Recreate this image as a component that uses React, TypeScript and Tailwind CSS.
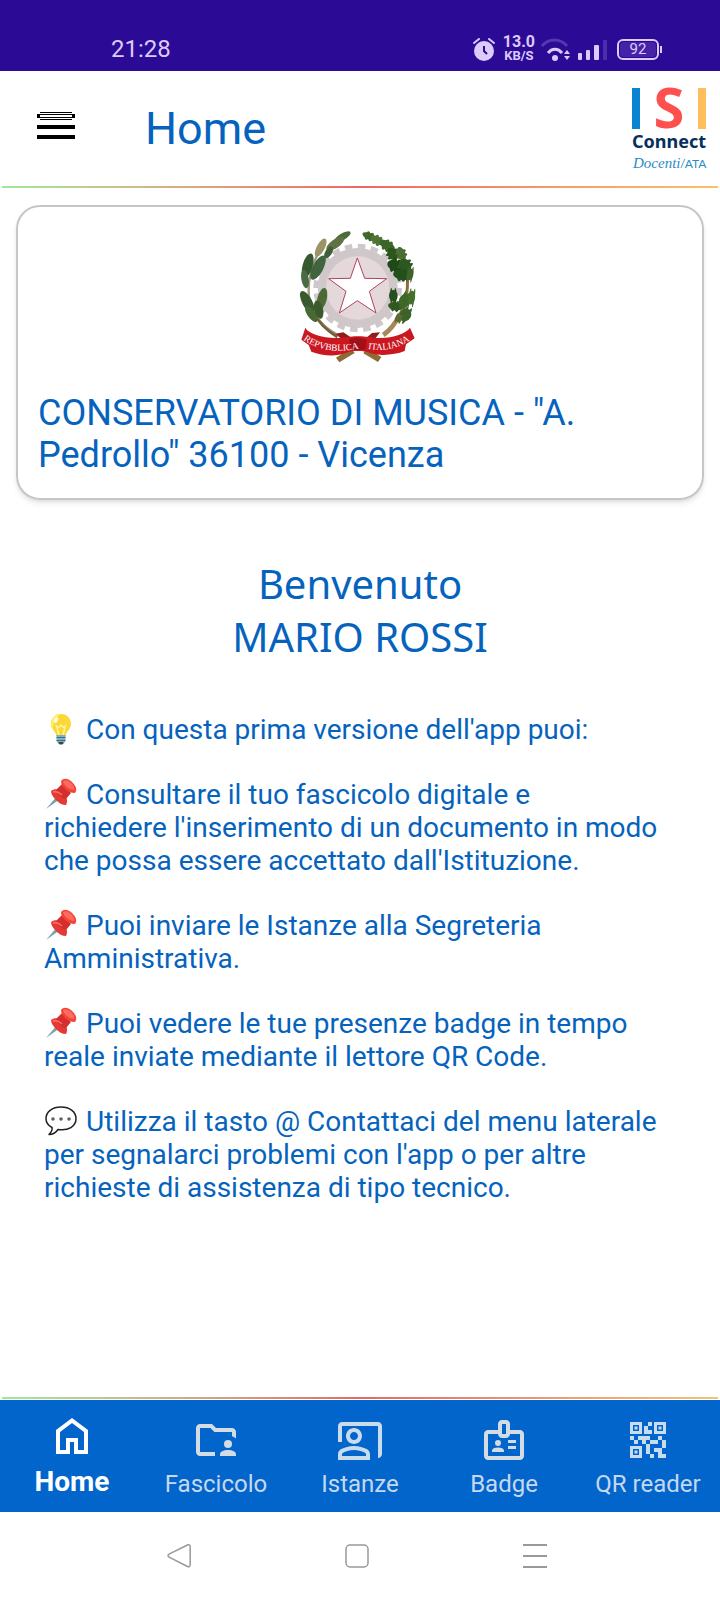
import React from 'react';
import { MdOutlineBadge, MdOutlineCoPresent, MdQrCode2 } from 'react-icons/md';

const leaves = [
  // olive branch: cx, cy, rx, ry, rotation, colour
  [218, 113, 27, 10, -30, '#4b6b3a'],
  [196, 134, 32, 13, -36, '#5f7245'],
  [176, 160, 20, 10, -58, '#3f5f36'],
  [152, 146, 30, 12, -62, '#9a9468'],
  [144, 206, 40, 16, -62, '#41643f'],
  [113, 200, 38, 15, -74, '#35582f'],
  [105, 240, 28, 11, -100, '#4a6b43'],
  [112, 310, 38, 15, 62, '#39592f'],
  [124, 345, 28, 12, 55, '#476936'],
  [156, 300, 34, 14, -76, '#4c6a36'],
  [146, 332, 28, 13, 76, '#3a5a2c'],
] as const;

const oakLeaves = [
  [298, 112, 22, 12, 22, '#41692b'],
  [322, 124, 22, 14, 30, '#4f7433'],
  [352, 140, 26, 16, 32, '#3c6529'],
  [368, 165, 20, 18, 60, '#2d5520'],
  [394, 165, 22, 15, 70, '#4a6f33'],
  [376, 200, 25, 20, 20, '#1f4a18'],
  [405, 200, 22, 22, 60, '#2c5822'],
  [396, 228, 27, 18, 10, '#24501b'],
  [420, 226, 10, 22, 10, '#3c6329'],
  [370, 290, 13, 21, 0, '#24511e'],
  [376, 322, 22, 15, 10, '#2f5920'],
  [404, 305, 17, 26, 20, '#3c6927'],
  [425, 296, 10, 26, 8, '#44702c'],
  [406, 348, 17, 25, 32, '#3c6328'],
  [386, 358, 10, 14, 20, '#5c6a33'],
] as const;

const Emblem = () => (
  <svg viewBox="84 90 360 405" className="h-[135px] w-[120px]" role="img" aria-label="Repubblica Italiana">
    <circle cx="263" cy="267" r="122" fill="none" stroke="#d0c7ca" strokeWidth="22" strokeDasharray="22 16.300" />
    <circle cx="263" cy="267" r="120" fill="#d0c7ca" />
    <circle cx="263" cy="267" r="95" fill="#e5d8db" />
    <path
      d="M262 177l22 61 66 1-52 38 20 65-56-37-54 37 20-65-52-38 65-1z"
      fill="#fff"
      stroke="#b0435c"
      strokeWidth="3"
    />
    <path d="M150 150c-30 60-42 110-30 160 12 44 40 74 80 96" fill="none" stroke="#a09a80" strokeWidth="7" />
    <path d="M130 340c16 32 40 54 72 74" fill="none" stroke="#75603a" strokeWidth="8" />
    <path d="M410 215c10 70-6 130-60 186" fill="none" stroke="#8b6c3f" strokeWidth="9" />
    <path d="M388 348c-12 26-26 44-48 60" fill="none" stroke="#a58a58" strokeWidth="14" />
    {leaves.map(([cx, cy, rx, ry, rotation, fill], i) => (
      <ellipse key={i} cx={cx} cy={cy} rx={rx} ry={ry} fill={fill} transform={`rotate(${rotation} ${cx} ${cy})`} />
    ))}
    {oakLeaves.map(([cx, cy, rx, ry, rotation, fill], i) => (
      <g key={i} fill={fill} transform={`rotate(${rotation} ${cx} ${cy})`}>
        <ellipse cx={cx} cy={cy} rx={rx} ry={ry * 0.8} />
        <ellipse cx={cx - 6} cy={cy} rx={rx * 0.3} ry={ry * 1.1} />
        <ellipse cx={cx + 6} cy={cy} rx={rx * 0.3} ry={ry * 1.1} />
      </g>
    ))}
    <path d="M242 448l-44 28 10 14 46-28zM290 448l44 26-10 15-44-26z" fill="#8e6a35" />
    <path d="M196 404l24-4 30 20-28 6zM330 400l-24 2-24 20 30 2z" fill="#8f1d1c" />
    <path
      d="M106 386c10 20 60 34 108 30 20-2 36-4 50-4s30 2 50 4c48 4 92-10 106-30l14 32-26 18-4 20c-30 12-74 16-104 6-10-4-22-6-36-6s-26 2-36 6c-32 12-72 8-104-4l-8-20-22-16z"
      fill="#cb1720"
    />
    <path d="M238 420l24-6 28 8-4 30h-44z" fill="#a30f16" />
    <path id="motto-left" d="M100 422c44 34 108 42 178 24" fill="none" />
    <path id="motto-right" d="M294 450c52 8 96-2 144-38" fill="none" />
    <g fill="#fff" className="font-['Liberation_Serif',serif] text-[28px]">
      <text>
        <textPath href="#motto-left">REPVBBLICA</textPath>
      </text>
      <text>
        <textPath href="#motto-right">ITALIANA</textPath>
      </text>
    </g>
  </svg>
);

const IsiLogo = () => (
  <svg viewBox="0 0 80 90" className="h-[90px] w-[80px] overflow-visible" role="img" aria-label="ISI Connect Docenti/ATA">
    <rect x="4" y="4" width="8" height="41" fill="#0a84d0" />
    <rect x="70" y="4" width="8" height="41" fill="#ffbe5c" />
    <text x="41" y="44" textAnchor="middle" fill="#ff5050" className="font-['Open_Sans',sans-serif] text-[56px] font-bold">
      S
    </text>
    <text x="4" y="64" fill="#06305c" className="font-['Noto_Sans',sans-serif] text-[18px] font-bold">
      Connect
    </text>
    <text x="5" y="84" fill="#2b8cc4" className="font-['Liberation_Serif',serif] text-[15px] italic">
      Docenti
    </text>
    <text x="52" y="84" fill="#2b8cc4" className="font-['Lato',sans-serif] text-[12px]">
      /ATA
    </text>
  </svg>
);

const MenuIcon = () => (
  <svg viewBox="0 0 38 28" className="h-7 w-[38px]" shapeRendering="crispEdges" aria-hidden="true">
    <path d="M3 0h32v1H3zM0 2h38v4H0zM3 7h32v1H3zM0 13h38v4H0zM0 23h38v4H0z" />
    <path d="M3 3h32v2H3z" fill="#fff" />
  </svg>
);

const emojiClass = 'mr-2 inline-block h-8 w-[34px] align-[-6px]';

const BulbEmoji = () => (
  <svg viewBox="0 0 34 32" className={emojiClass} role="img" aria-label="Idea">
    <path d="M17 1C10.500 1 7 6 7 11c0 5 4.500 7 5.500 12h9C22.500 18 27 16 27 11c0-5-3.500-10-10-10z" fill="#fdd835" />
    <path d="M17 1C10.500 1 7 6 7 11c0 2 .6 3.500 1.500 5C10 9 12 4 17 1z" fill="#ffee58" />
    <path d="M15 22l-2.500-9 2 1.500L17 12l2.500 2.500 2-1.500L19 22" fill="none" stroke="#fff59d" strokeWidth="1.500" />
    <ellipse cx="12" cy="7" rx="2" ry="3" fill="#fffde7" transform="rotate(30 12 7)" />
    <path d="M12.500 22h9v6l-2 3h-5l-2-3z" fill="#82aec0" />
    <path d="M12.500 24.500h9M12.500 27.500h9" stroke="#2f7889" strokeWidth="1" />
    <path d="M14.500 29h5l-1 2.500h-3z" fill="#424242" />
  </svg>
);

const PinEmoji = () => (
  <svg viewBox="0 0 34 32" className={emojiClass} role="img" aria-label="Nota">
    <path d="M2 31l11-13 3 3z" fill="#78a3ad" />
    <path d="M7 13c4-3 8-2 12 2s5 8 3 12c-4 0-7-2-10-5s-5-6-5-9z" fill="#e53935" />
    <path d="M12 12l6-6 9 9-5 6c-5-1-8-4-10-9z" fill="#d32f2f" />
    <path d="M17 3c3-4 8-2 11 1s6 7 3 11c-4 0-8-2-10-4s-4-5-4-8z" fill="#f44336" />
    <path d="M19 3c3-2 6 0 8 2s4 5 3 7c-4 0-10-4-11-9z" fill="#ff6b60" />
    <path d="M9 14c3-1 6 0 9 3" fill="none" stroke="#ff6b60" strokeWidth="1.500" />
  </svg>
);

const SpeechEmoji = () => (
  <svg viewBox="0 0 34 32" className={emojiClass} role="img" aria-label="Messaggio">
    <path
      d="M17 2C8 2 2 7 2 13.500c0 4 2 7 6 9 .5 2-.5 4.500-3 7 4 0 7-2 9-5 10.500 1.500 18-3 18-11C32 7 26 2 17 2z"
      fill="#fff"
      stroke="#212121"
      strokeWidth="1.500"
      strokeLinejoin="round"
    />
    <g fill="#616161">
      <circle cx="9" cy="14" r="1.800" />
      <circle cx="17" cy="14" r="1.800" />
      <circle cx="25" cy="14" r="1.800" />
    </g>
  </svg>
);

const HomeIcon = () => (
  <svg viewBox="0 0 24 24" className="h-12 w-12" fill="currentColor" aria-hidden="true">
    <path d="M6 19h3v-6h6v6h3v-9l-6-4.500L6 10v9zm-2 2V9l8-6 8 6v12h-7v-6h-2v6H4z" />
  </svg>
);

const FolderIcon = () => (
  <svg viewBox="0 0 24 24" className="h-12 w-12 text-[#d3dbe4]" fill="currentColor" aria-hidden="true">
    <path d="M11.500 20H4c-1.100 0-2-.9-2-2V6c0-1.100.9-2 2-2h6l2 2h8c1.100 0 2 .9 2 2v3.300c-.5-.5-1.200-.9-2-1.200V8h-8.800l-2-2H4v12h7.500z" />
    <circle cx="18" cy="14" r="2" />
    <path d="M14 20v-.8c0-1.300 1.700-2.200 4-2.200s4 .9 4 2.200v.8z" />
  </svg>
);

const tabs = [
  { label: 'Home', icon: <HomeIcon />, active: true },
  { label: 'Fascicolo', icon: <FolderIcon /> },
  { label: 'Istanze', icon: <MdOutlineCoPresent className="h-12 w-12 text-[#c9dced]" /> },
  { label: 'Badge', icon: <MdOutlineBadge className="h-12 w-12 text-[#d3dbe4]" /> },
  { label: 'QR reader', icon: <MdQrCode2 className="h-12 w-12 text-[#c9dced]" /> },
];

function StatusBar() {
  return (
    <div className="flex h-[71px] items-end bg-[#2b0a96] pr-[58px] pb-[7px] pl-[111px] text-[#dccbfa]">
      <span className="text-[24px] leading-[30px]">21:28</span>
      <div className="ml-auto flex items-center">
        <svg viewBox="0 0 22 24" className="h-6 w-[22px]" aria-hidden="true">
          <circle cx="11" cy="13" r="10" fill="currentColor" />
          <path d="M1 5l5-4M21 5l-5-4" stroke="currentColor" strokeWidth="2" strokeLinecap="round" />
          <path d="M11 8v5l3 3" fill="none" stroke="#2b0a96" strokeWidth="2" />
        </svg>
        <div className="ml-2 pb-0.5 text-center font-bold">
          <div className="text-[16px] leading-[14px]">13.0</div>
          <div className="text-[13px] leading-[13px]">KB/S</div>
        </div>
        <svg viewBox="0 0 30 24" className="ml-1.5 h-6 w-[30px]" fill="none" aria-hidden="true">
          <path d="M1 8c7-8 18-8 25 0" stroke="#5637ae" strokeWidth="3" />
          <path d="M7 15c4-5 10-5 14 0" stroke="currentColor" strokeWidth="3" />
          <circle cx="14" cy="20" r="3" fill="currentColor" />
          <path d="M23 16l3-4 3 4zM23 18l3 4 3-4z" fill="currentColor" />
        </svg>
        <svg viewBox="0 0 29 22" className="ml-[7px] h-[22px] w-[29px]" fill="currentColor" aria-hidden="true">
          <rect x="0" y="14" width="4" height="7" rx="1" />
          <rect x="8" y="11" width="4" height="10" rx="1" />
          <rect x="16" y="6" width="5" height="15" rx="1" />
          <rect x="25" y="1" width="4" height="20" rx="1" fill="#4e2cab" />
        </svg>
        <div className="ml-2.5 flex items-center gap-px">
          <div className="h-[21px] w-[42px] rounded-md border-2 border-current p-px">
            <div className="flex h-full items-center justify-center rounded-sm bg-[#4622a6] text-[15px]">92</div>
          </div>
          <div className="h-[7px] w-[2px] bg-current" />
        </div>
      </div>
    </div>
  );
}

export default function App() {
  return (
    <div className="flex min-h-screen flex-col bg-white font-['Roboto',sans-serif] text-[#0563be]">
      <StatusBar />

      <header>
        <div className="flex h-[115px] items-center pr-3">
          <button type="button" aria-label="Apri menu" className="mb-1.5 ml-[37px]">
            <MenuIcon />
          </button>
          <h1 className="ml-[70px] text-[45px] leading-[54px]">Home</h1>
          <div className="ml-auto">
            <IsiLogo />
          </div>
        </div>
        <div className="mx-0.5 h-0.5 bg-gradient-to-r from-[#9ee89e] via-[#ee6666] to-[#f8c268]" />
      </header>

      <main className="flex-1 px-4">
        <section className="mt-[17px] rounded-3xl border-2 border-[#c6c6c6] px-5 pt-[22px] pb-[22px] shadow-md">
          <div className="flex justify-center pr-1">
            <Emblem />
          </div>
          <h2 className="mt-7 text-[36px] leading-[42px]">CONSERVATORIO DI MUSICA - "A. Pedrollo" 36100 - Vicenza</h2>
        </section>

        <div className="mt-[57px] text-center font-['Noto_Sans',sans-serif] text-[40px] leading-[53px]">
          <p>Benvenuto</p>
          <p>MARIO ROSSI</p>
        </div>

        <div className="mt-[50px] space-y-8 px-7 text-[28px] leading-[33px]">
          <p>
            <BulbEmoji />
            Con questa prima versione dell'app puoi:
          </p>
          <p>
            <PinEmoji />
            Consultare il tuo fascicolo digitale e
            <br />
            richiedere l'inserimento di un documento in modo che possa essere accettato dall'Istituzione.
          </p>
          <p>
            <PinEmoji />
            Puoi inviare le Istanze alla Segreteria Amministrativa.
          </p>
          <p>
            <PinEmoji />
            Puoi vedere le tue presenze badge in tempo reale inviate mediante il lettore QR Code.
          </p>
          <p>
            <SpeechEmoji />
            Utilizza il tasto @ Contattaci del menu laterale per segnalarci problemi con l'app o per altre richieste di assistenza di tipo tecnico.
          </p>
        </div>
      </main>

      <div className="mx-0.5 mb-px h-0.5 bg-gradient-to-r from-[#9ee89e] via-[#e06a6a] to-[#f0c474]" />
      <nav className="grid h-28 grid-cols-5 bg-[#0265cc]">
        {tabs.map((tab) => (
          <button
            key={tab.label}
            type="button"
            aria-current={tab.active ? 'page' : undefined}
            className={
              tab.active
                ? 'flex flex-col items-center gap-1.5 pt-3 text-[28px] leading-8 font-bold text-white'
                : 'flex flex-col items-center gap-1.5 pt-4 text-[24px] leading-7 text-[#c6d8ee]'
            }
          >
            {tab.icon}
            <span className="whitespace-nowrap">{tab.label}</span>
          </button>
        ))}
      </nav>

      <div className="flex h-[88px] items-center justify-center gap-[154px] pr-1.5 text-[#999]">
        <button type="button" aria-label="Indietro">
          <svg viewBox="0 0 24 24" className="h-6 w-6" fill="none" stroke="currentColor" strokeWidth="1.500">
            <path d="M20.500 1L2.500 9.800c-2 1-2 2.600 0 3.600L20.500 22.500c1.500.7 2.700 0 2.700-1.500V2.500c0-1.500-1.200-2.200-2.700-1.500z" />
          </svg>
        </button>
        <button type="button" aria-label="Schermata principale">
          <svg viewBox="0 0 24 24" className="h-6 w-6" fill="none" stroke="currentColor" strokeWidth="1.500">
            <rect x="1" y="1" width="22" height="22" rx="4" />
          </svg>
        </button>
        <button type="button" aria-label="App recenti">
          <svg viewBox="0 0 24 24" className="h-6 w-6" stroke="currentColor" strokeWidth="2">
            <path d="M0 1h24M0 12h24M0 23h24" />
          </svg>
        </button>
      </div>
    </div>
  );
}
